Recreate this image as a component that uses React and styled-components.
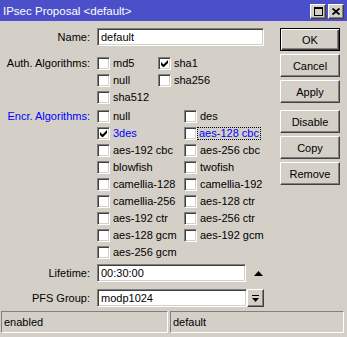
import React from "react";
import styled, { createGlobalStyle, css } from "styled-components";

const Global = createGlobalStyle`
  html, body { margin: 0; padding: 0; background: #d4d0c8; }
  body { font-family: "Liberation Sans", Arial, sans-serif; font-size: 11px; color: #000; }
  * { box-sizing: border-box; }
`;

const Window = styled.div`
  width: 347px;
  height: 337px;
  background: #d4d0c8;
  display: flex;
  flex-direction: column;
  overflow: hidden;
`;

const TitleBar = styled.div`
  height: 21px;
  background: #4b4fc9;
  color: #fff;
  display: flex;
  align-items: center;
  padding: 0 3px 0 3px;
  font-size: 11.5px;
`;

const TitleText = styled.div`
  flex: 1;
  white-space: nowrap;
`;

const TitleButtons = styled.div`
  display: flex;
  gap: 2px;
  margin-top: 1px;
`;

const raised = css`
  border-style: solid;
  border-width: 1px;
  border-color: #fff #404040 #404040 #fff;
  box-shadow: inset -1px -1px 0 #808080;
`;

const TitleButton = styled.div`
  width: 16px;
  height: 15px;
  background: #d4d0c8;
  ${raised};
  display: flex;
  align-items: center;
  justify-content: center;
`;

const Content = styled.div`
  flex: 1;
  display: flex;
  padding: 7px 7px 0 0;
`;

const Form = styled.div`
  width: 280px;
  display: flex;
  flex-direction: column;
`;

const Row = styled.div`
  display: grid;
  grid-template-columns: 90px auto;
  column-gap: 7px;
  align-items: ${(p) => (p.$top ? "start" : "center")};
  margin-top: ${(p) => p.$mt || 0}px;
`;

const Label = styled.div`
  text-align: right;
  white-space: nowrap;
  color: ${(p) => (p.$blue ? "#0000ff" : "#000")};
  line-height: ${(p) => (p.$top ? "17px" : "normal")};
`;

const sunken = css`
  border-style: solid;
  border-width: 1px;
  border-color: #808080 #fff #fff #808080;
  box-shadow: inset 1px 1px 0 #404040, inset -1px -1px 0 #d4d0c8;
`;

const TextField = styled.div`
  width: ${(p) => p.$w}px;
  height: 18px;
  background: #fff;
  ${sunken};
  display: flex;
  align-items: center;
  padding-left: 3px;
  white-space: nowrap;
`;

const Field = styled.div`
  display: flex;
  align-items: center;
`;

const CheckGrid = styled.div`
  display: grid;
  grid-template-columns: ${(p) => p.$col}px ${(p) => p.$col}px;
  grid-auto-rows: 17px;
`;

const CheckItem = styled.div`
  display: flex;
  align-items: center;
  color: ${(p) => (p.$blue ? "#0000ff" : "#000")};
  white-space: nowrap;
`;

const Box = styled.div`
  width: 13px;
  height: 13px;
  background: #fff;
  ${sunken};
  display: flex;
  align-items: center;
  justify-content: center;
  margin-right: ${(p) => (p.$focus ? 0 : 3)}px;
`;

const CheckText = styled.span`
  line-height: 11px;
  ${(p) =>
    p.$focus &&
    css`
      border: 1px dotted #000;
      padding: 0 1px;
      margin-left: 0;
    `}
`;

const ButtonColumn = styled.div`
  width: 60px;
  margin-left: auto;
  display: flex;
  flex-direction: column;
  gap: 3px;
`;

const Button = styled.div`
  height: 23px;
  width: 60px;
  display: flex;
  align-items: center;
  justify-content: center;
  background: #d4d0c8;
  ${(p) =>
    p.$default
      ? css`
          border: 1px solid #000;
          box-shadow: inset 1px 1px 0 #fff, inset -1px -1px 0 #404040, inset -2px -2px 0 #808080;
        `
      : raised};
  margin-top: ${(p) => p.$mt || 0}px;
`;

const ArrowButton = styled.div`
  width: 17px;
  height: 18px;
  margin-left: 4px;
  display: flex;
  align-items: center;
  justify-content: center;
`;

const DropButton = styled.div`
  width: 17px;
  height: 18px;
  background: #d4d0c8;
  ${raised};
  display: flex;
  align-items: center;
  justify-content: center;
`;

const StatusBar = styled.div`
  display: flex;
  gap: 2px;
  padding: 0 3px 4px 1px;
`;

const StatusPanel = styled.div`
  height: 22px;
  flex: ${(p) => p.$flex};
  border-style: solid;
  border-width: 1px;
  border-color: #808080 #fff #fff #808080;
  display: flex;
  align-items: center;
  padding-left: 2px;
`;

const Check = ({ label, checked, blue, focus }) => (
  <CheckItem $blue={blue}>
    <Box $focus={focus}>
      {checked && (
        <svg width="7" height="7" viewBox="0 0 7 7">
          <path d="M0 2v3l2 2h1l4-4V0L2.5 4.5z" fill="#000" />
        </svg>
      )}
    </Box>
    <CheckText $focus={focus}>{label}</CheckText>
  </CheckItem>
);

export default function App() {
  return (
    <>
      <Global />
      <Window>
        <TitleBar>
          <TitleText>IPsec Proposal &lt;default&gt;</TitleText>
          <TitleButtons>
            <TitleButton>
              <svg width="9" height="9" viewBox="0 0 9 9">
                <rect x="0.5" y="0.5" width="8" height="8" fill="none" stroke="#000" />
                <rect x="0" y="0" width="9" height="2" fill="#000" />
              </svg>
            </TitleButton>
            <TitleButton>
              <svg width="8" height="7" viewBox="0 0 8 7">
                <path d="M0.5 0.5L7.5 6.5M7.5 0.5L0.5 6.5" stroke="#000" strokeWidth="1.8" />
              </svg>
            </TitleButton>
          </TitleButtons>
        </TitleBar>
        <Content>
          <Form>
            <Row>
              <Label>Name:</Label>
              <TextField $w={167}>default</TextField>
            </Row>
            <Row $top $mt={9}>
              <Label $top>Auth. Algorithms:</Label>
              <CheckGrid $col={61}>
                <Check label="md5" />
                <Check label="sha1" checked />
                <Check label="null" />
                <Check label="sha256" />
                <Check label="sha512" />
              </CheckGrid>
            </Row>
            <Row $top $mt={2}>
              <Label $top $blue>Encr. Algorithms:</Label>
              <CheckGrid $col={87}>
                <Check label="null" />
                <Check label="des" />
                <Check label="3des" checked blue />
                <Check label="aes-128 cbc" blue focus />
                <Check label="aes-192 cbc" />
                <Check label="aes-256 cbc" />
                <Check label="blowfish" />
                <Check label="twofish" />
                <Check label="camellia-128" />
                <Check label="camellia-192" />
                <Check label="camellia-256" />
                <Check label="aes-128 ctr" />
                <Check label="aes-192 ctr" />
                <Check label="aes-256 ctr" />
                <Check label="aes-128 gcm" />
                <Check label="aes-192 gcm" />
                <Check label="aes-256 gcm" />
              </CheckGrid>
            </Row>
            <Row $mt={3}>
              <Label>Lifetime:</Label>
              <Field>
                <TextField $w={149}>00:30:00</TextField>
                <ArrowButton>
                  <svg width="9" height="5" viewBox="0 0 9 5">
                    <path d="M4.5 0L9 5H0z" fill="#000" />
                  </svg>
                </ArrowButton>
              </Field>
            </Row>
            <Row $mt={7}>
              <Label>PFS Group:</Label>
              <Field>
                <TextField $w={150}>modp1024</TextField>
                <DropButton>
                  <svg width="7" height="7" viewBox="0 0 7 7">
                    <rect x="0" y="0" width="7" height="1" fill="#000" />
                    <path d="M0 3H7L3.5 7z" fill="#000" />
                  </svg>
                </DropButton>
              </Field>
            </Row>
          </Form>
          <ButtonColumn>
            <Button $default>OK</Button>
            <Button>Cancel</Button>
            <Button>Apply</Button>
            <Button $mt={4}>Disable</Button>
            <Button>Copy</Button>
            <Button>Remove</Button>
          </ButtonColumn>
        </Content>
        <StatusBar>
          <StatusPanel $flex="0 0 167px">enabled</StatusPanel>
          <StatusPanel $flex="1">default</StatusPanel>
        </StatusBar>
      </Window>
    </>
  );
}
